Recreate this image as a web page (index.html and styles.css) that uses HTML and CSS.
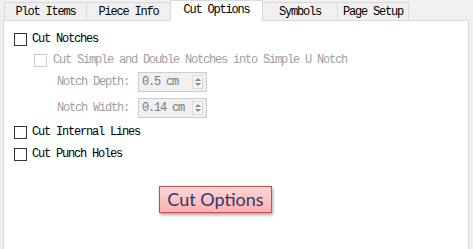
FILE: index.html
```html
<!DOCTYPE html>
<html lang="en">
<head>
    <meta charset="UTF-8">
    <title>Cut Options</title>
    <link rel="stylesheet" href="styles.css">
</head>
<body>
    <div class="tabs">
        <div class="tab t1">Plot Items</div>
        <div class="tab t2">Piece Info</div>
        <div class="tab t3 active">Cut Options</div>
        <div class="tab t4">Symbols</div>
        <div class="tab t5">Page Setup</div>
    </div>

    <div class="pane">
        <div class="row r1">
            <span class="box"></span>
            <span class="label">Cut Notches</span>
        </div>
        <div class="row r2 disabled">
            <span class="box"></span>
            <span class="label">Cut Simple and Double Notches into Simple U Notch</span>
        </div>
        <div class="row r3 disabled">
            <span class="field-label">Notch Depth:</span>
            <div class="spin">
                <span class="spin-value">0.5 cm</span>
                <span class="spin-btns">
                    <span class="arrow up"></span>
                    <span class="arrow down"></span>
                </span>
            </div>
        </div>
        <div class="row r4 disabled">
            <span class="field-label">Notch Width:</span>
            <div class="spin">
                <span class="spin-value">0.14 cm</span>
                <span class="spin-btns">
                    <span class="arrow up"></span>
                    <span class="arrow down"></span>
                </span>
            </div>
        </div>
        <div class="row r5">
            <span class="box"></span>
            <span class="label">Cut Internal Lines</span>
        </div>
        <div class="row r6">
            <span class="box"></span>
            <span class="label">Cut Punch Holes</span>
        </div>

        <div class="caption">Cut Options</div>
    </div>
</body>
</html>
```

FILE: styles.css
```css
body {
    margin: 0;
    background: #f0f0f0;
    font-family: "Liberation Mono", monospace;
    font-size: 12px;
    letter-spacing: -1.2px;
    color: #000;
    width: 473px;
    height: 249px;
    overflow: hidden;
}
.tabs {
    display: flex;
    align-items: flex-end;
    height: 20px;
    padding-left: 4px;
}
.tab {
    box-sizing: border-box;
    height: 18px;
    border: 1px solid #d9d9d9;
    border-bottom: none;
    margin-right: -1px;
    background: #f0f0f0;
    text-align: center;
    line-height: 18px;
}
.tab.active {
    height: 21px;
    background: #fff;
    line-height: 19px;
    position: relative;
    margin-bottom: -1px;
    z-index: 1;
}
.t1 { width: 83px; }
.t2 { width: 85px; }
.t3 { width: 93px; }
.t4 { width: 76px; }
.t5 { width: 72px; }
.pane {
    box-sizing: border-box;
    margin-left: 3px;
    width: 466px;
    height: 230px;
    border: 1px solid #d9d9d9;
    background: #fff;
    padding-top: 8px;
}
.row {
    display: flex;
    align-items: center;
    height: 20px;
}
.r1 { padding-left: 10px; }
.r2 { padding-left: 30px; margin-top: 1px; }
.r3 { padding-left: 53px; margin-top: 2px; }
.r4 { padding-left: 53px; margin-top: 6px; }
.r5 { padding-left: 10px; margin-top: 4px; }
.r6 { padding-left: 10px; margin-top: 2px; }
.box {
    box-sizing: border-box;
    width: 13px;
    height: 13px;
    border: 1px solid #333;
    background: #fff;
    margin-right: 5px;
}
.disabled {
    color: #a0a0a0;
}
.disabled .box {
    border-color: #cccccc;
    margin-right: 6px;
}
.field-label {
    width: 81px;
}
.spin {
    box-sizing: border-box;
    display: flex;
    align-items: center;
    width: 69px;
    height: 20px;
    border: 1px solid #cccccc;
    background: #f0f0f0;
    padding-left: 3px;
}
.spin-value {
    flex: 1;
    color: #7a7a7a;
}
.spin-btns {
    box-sizing: border-box;
    display: flex;
    flex-direction: column;
    justify-content: space-between;
    align-items: center;
    width: 11px;
    height: 14px;
    margin-right: 3px;
    border: 1px solid #dcdcdc;
    background: #f4f4f4;
    padding: 2px 0;
}
.arrow {
    width: 0;
    height: 0;
    border-left: 3px solid transparent;
    border-right: 3px solid transparent;
}
.arrow.up { border-bottom: 3px solid #8a8a8a; }
.arrow.down { border-top: 3px solid #8a8a8a; }
.caption {
    box-sizing: border-box;
    margin: 22px 0 0 155px;
    width: 113px;
    height: 27px;
    border: 1px solid #c94a4a;
    background: linear-gradient(#ffd6d6, #ffb0b0);
    box-shadow: 1px 2px 3px rgba(0, 0, 0, 0.35);
    font-family: Lato, "Open Sans", sans-serif;
    font-size: 18px;
    letter-spacing: 0;
    color: #2d3a6e;
    text-align: center;
    line-height: 24px;
}
```
